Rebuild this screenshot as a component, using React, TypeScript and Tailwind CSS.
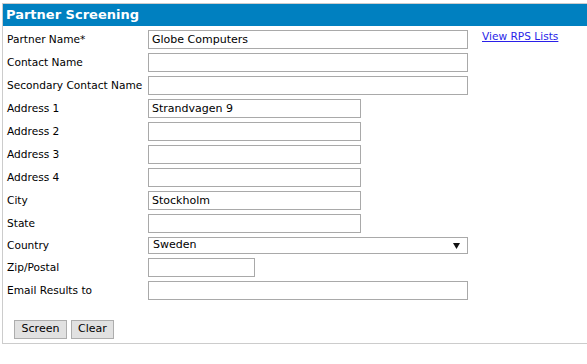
import React from "react";

const font = { fontFamily: '"DejaVu Sans", Verdana, sans-serif' };

function Row({ label, children, extra, h = "h-[23px]" }: { label: string; children?: React.ReactNode; extra?: React.ReactNode; h?: string }) {
  return (
    <div className={`flex items-center ${h}`}>
      <div className="w-[145px] shrink-0 pl-[4px] text-[10.6px] text-black">{label}</div>
      <div className="w-[320px] shrink-0 flex items-center">{children}</div>
      {extra}
    </div>
  );
}

function Input({ value = "", w = "w-[320px]", h = "h-[19px]" }: { value?: string; w?: string; h?: string }) {
  return (
    <div className={`${w} ${h} border border-[#a9a9a9] bg-white pl-[3px] text-[11px] leading-[17px] text-black`}>{value}</div>
  );
}

export default function App() {
  return (
    <div className="w-[587px] h-[364px] bg-white" style={font}>
      <div className="ml-[2px] pt-[3px]">
        <div className="border-t border-l border-b border-[#cccccc]">
          <div className="h-[22px] bg-[#0080c0] pl-[3px] text-[13px] font-bold leading-[22px] text-white">Partner Screening</div>
          <div className="pt-[2px]">
            <Row
              label="Partner Name*"
              extra={
                <a href="#" className="ml-[14px] self-start mt-[1px] text-[10.6px] text-[#2a1fe8] underline">
                  View RPS Lists
                </a>
              }
            >
              <Input value="Globe Computers" />
            </Row>
            <Row label="Contact Name"><Input /></Row>
            <Row label="Secondary Contact Name"><Input /></Row>
            <Row label="Address 1"><Input value="Strandvagen 9" w="w-[213px]" /></Row>
            <Row label="Address 2"><Input w="w-[213px]" /></Row>
            <Row label="Address 3"><Input w="w-[213px]" /></Row>
            <Row label="Address 4"><Input w="w-[213px]" /></Row>
            <Row label="City"><Input value="Stockholm" w="w-[213px]" /></Row>
            <Row label="State"><Input w="w-[213px]" /></Row>
            <Row label="Country" h="h-[21px]">
              <div className="flex h-[17px] w-[320px] items-center justify-between border border-[#a9a9a9] bg-white pl-[4px] pr-[7px] text-[11px] text-black">
                <span>Sweden</span>
                <svg width="7" height="6" viewBox="0 0 7 6"><path d="M0 0H7L3.5 6Z" fill="#111" /></svg>
              </div>
            </Row>
            <Row label="Zip/Postal"><Input w="w-[107px]" /></Row>
            <Row label="Email Results to"><Input /></Row>
            <div className="flex gap-[4px] pl-[11px] pt-[18px] pb-[4px]">
              <button className="h-[19px] w-[53px] border border-[#adadad] bg-[#e1e1e1] text-[11px] text-black">Screen</button>
              <button className="h-[19px] w-[43px] border border-[#adadad] bg-[#e1e1e1] text-[11px] text-black">Clear</button>
            </div>
          </div>
        </div>
      </div>
    </div>
  );
}
